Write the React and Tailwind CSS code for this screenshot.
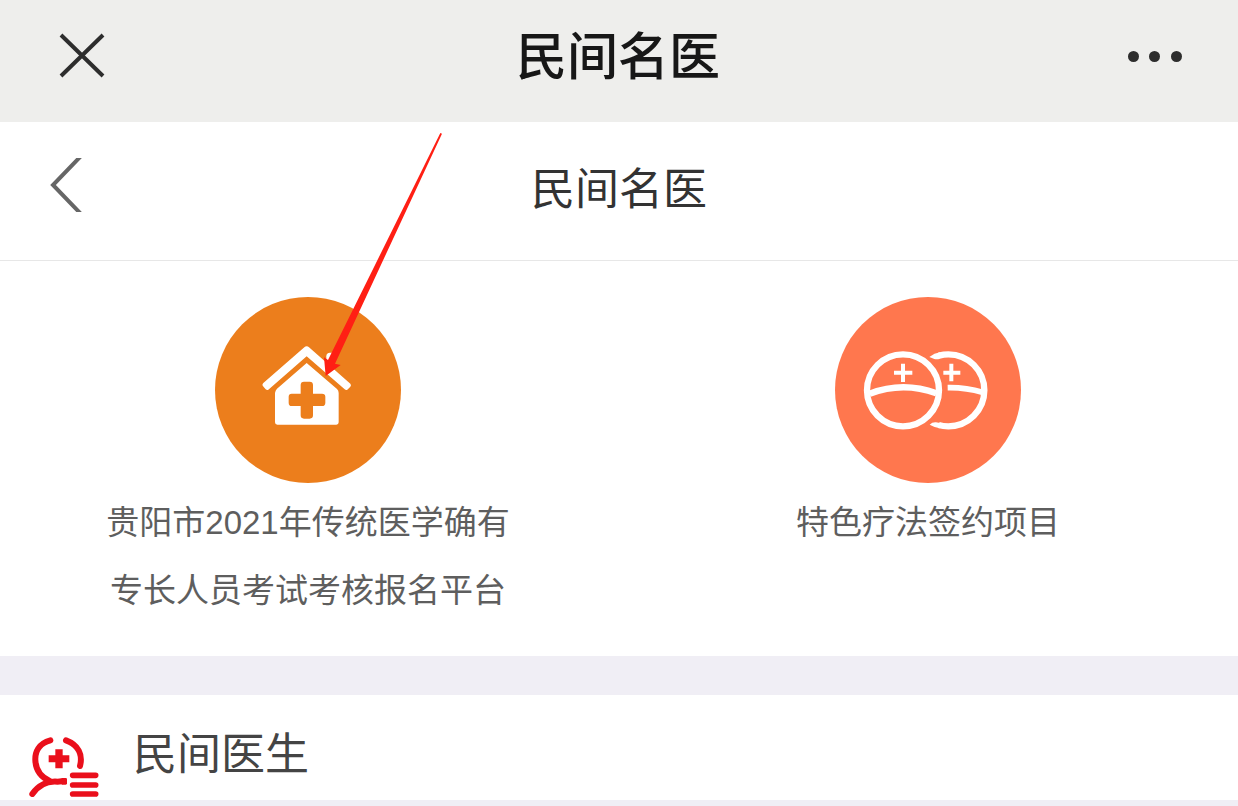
import React from "react";

function HouseIcon() {
  return (
    <svg viewBox="0 0 558 558" className="size-full" aria-hidden="true">
      <path
        d="M275 148 Q279 148 282 151 L406 260 Q410 265 406 269 L397 278 Q393 280 389 277L275 178 L160 278 Q156 280 152 277 L143 266 Q141 262 145 258 L268 151 Q271 148 275 148Z"
        fill="#fff"
      />
      <path d="M334 178 Q334 167 345 167 H358 V216 L334 196z" fill="#fff" />
      <path
        fillRule="evenodd"
        fill="#fff"
        d="M275 198 L366 276 Q371 281 371 288 V376 Q371 383 364 383 H187 Q180 383 180 376 V288 Q181 280 186 275 Z M267 254 Q257 254 257 264 V290 H230 Q221 290 221 299 V317 Q221 327 230 327 H257 V355 Q257 365 267 365 H284 Q294 365 294 355 V327 H321 Q331 327 331 317 V299 Q331 290 321 290 H294 V264 Q294 254 284 254 Z"
      />
    </svg>
  );
}

function TherapyIcon() {
  return (
    <svg viewBox="0 0 558 558" className="size-full" aria-hidden="true">
      <g fill="none" stroke="#fff" strokeWidth="19">
        <circle cx="204" cy="280" r="108" />
        <path d="M104 290 Q204 252 304 289" />
        <path d="M312 176 Q326 172 340 172 A108 108 0 0 1 340 388 Q324 388 311 384" />
        <path d="M338 272 Q393 271 442 286" strokeWidth="17" />
      </g>
      <path d="M283 180 Q298 168 315 166 V185 Q306 188 298 186z M284 383 Q292 375 303 376 L315 378 V394 Q298 391 284 383z" fill="#fff" />
      <g fill="none" stroke="#fff" strokeWidth="12">
        <path d="M204 200 V255 M177 227 H232" />
        <path d="M349 200 V253 M325 227 H376" />
      </g>
    </svg>
  );
}

function DoctorIcon() {
  return (
    <svg viewBox="0 0 210 180" className="h-[60px] w-[70px] shrink-0" aria-hidden="true">
      <g fill="none" stroke="#ea0f1b" strokeWidth="18" strokeLinecap="round">
        <path d="M64 10 C28 20 18 46 19 69 C20 98 36 120 62 132" />
        <path d="M111 10 C148 24 162 52 153 87" />
        <path d="M10 171 C28 145 56 131 86 134 L104 132" />
        <path d="M131 115 H200 M131 144 H200 M131 171 H200" strokeWidth="17" />
      </g>
      <path d="M98 123 H110 Q114 123 114 127 V139 Q114 143 110 143 H98z" fill="#ea0f1b" />
      <path d="M79 37 H101 V55 H121 V76 H101 V94 H79 V76 H59 V55 H79Z" fill="#ea0f1b" />
    </svg>
  );
}

function PointerArrow() {
  return (
    <svg
      viewBox="0 0 354 732"
      className="pointer-events-none absolute -top-[164px] left-[109px] z-10 h-[244px] w-[118px]"
      aria-hidden="true"
    >
      <path d="M349 0 L354 2 L33 692 L50 696 L5 729 L0 673 L12 681 Z" fill="#ff1f14" />
    </svg>
  );
}

function Tile({ color, icon, lines, children }) {
  return (
    <a href="#" className="flex flex-col items-center">
      <span className="relative block size-[186px]">
        <span className={`block size-full overflow-hidden rounded-full ${color}`}>{icon}</span>
        {children}
      </span>
      <span className="mt-1.5 text-center text-[33px] leading-[68px] text-[#5e5e5e]">
        {lines.map((line) => (
          <span key={line} className="block">
            {line}
          </span>
        ))}
      </span>
    </a>
  );
}

export default function App() {
  return (
    <div className="min-h-screen bg-[#f0eef5] font-['Liberation_Sans','Noto_Sans_CJK_SC',sans-serif]">
      <header className="flex h-[122px] items-start justify-between bg-[#eeeeec] px-14 text-[#2d2d2d]">
        <button type="button" aria-label="关闭" className="mt-7 flex h-[54px] w-[52px] items-center justify-center">
          <svg viewBox="0 0 52 54" className="h-[54px] w-[52px]" aria-hidden="true">
            <path d="M5 7 L47 48 M47 7 L5 48" stroke="currentColor" strokeWidth="4" fill="none" />
          </svg>
        </button>
        <h1 className="mt-4 font-['Noto_Sans_CJK_SC',sans-serif] text-[51px] leading-[74px] font-medium text-[#171717]">
          民间名医
        </h1>
        <button type="button" aria-label="更多" className="mt-7 flex h-14 w-[54px] items-center justify-between">
          <span className="size-[11px] rounded-full bg-current" />
          <span className="size-[11px] rounded-full bg-current" />
          <span className="size-[11px] rounded-full bg-current" />
        </button>
      </header>

      <nav className="grid h-[139px] grid-cols-[1fr_auto_1fr] items-start border-b border-[#e7e7e7] bg-white px-12">
        <a href="#" aria-label="返回" className="mt-9 block w-9 text-[#666]">
          <svg viewBox="0 0 36 54" className="h-[54px] w-9" aria-hidden="true">
            <path d="M33 -2 L5 27 L33 56" fill="none" stroke="currentColor" strokeWidth="4" />
          </svg>
        </a>
        <h2 className="mt-9 text-[44px] leading-[64px] text-[#333]">民间名医</h2>
      </nav>

      <main>
        <section className="grid grid-cols-2 gap-x-1 bg-white pt-9 pr-0.5 pb-[31px]">
          <Tile color="bg-[#ec7e1c]" icon={<HouseIcon />} lines={["贵阳市2021年传统医学确有", "专长人员考试考核报名平台"]}>
            <PointerArrow />
          </Tile>
          <Tile color="bg-[#ff774e]" icon={<TherapyIcon />} lines={["特色疗法签约项目"]} />
        </section>

        <section className="mt-[39px] flex h-[105px] items-end bg-white px-[29px] pb-[3px]">
          <DoctorIcon />
          <h2 className="mb-3 ml-[34px] text-[44px] leading-[60px] text-[#444]">民间医生</h2>
        </section>
      </main>
    </div>
  );
}
